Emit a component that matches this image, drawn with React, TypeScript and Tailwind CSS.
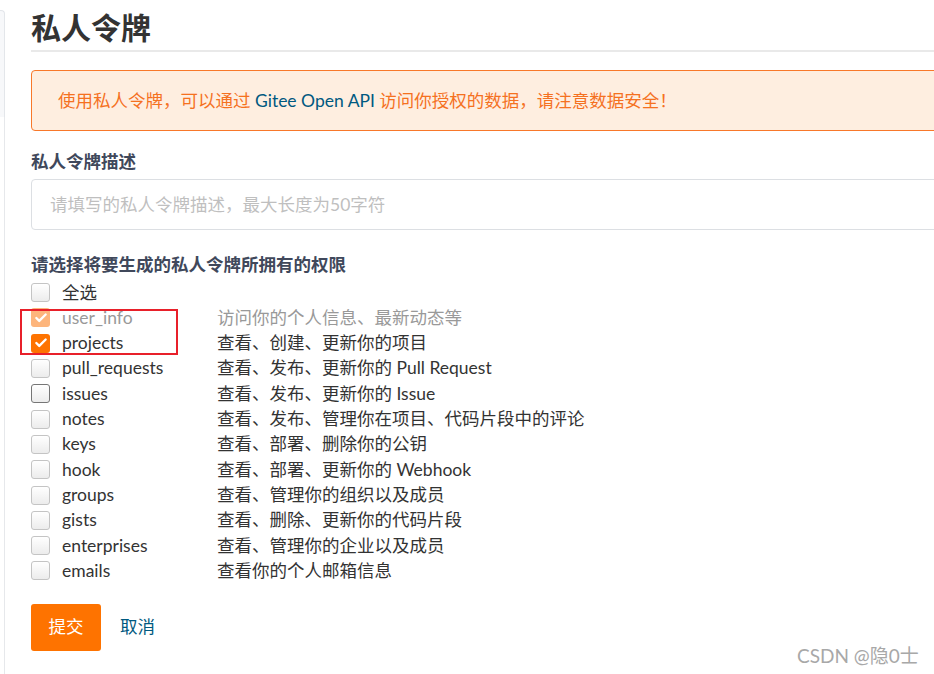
import { Check } from "lucide-react"

const scopes = [
  { name: "user_info", desc: "访问你的个人信息、最新动态等", checked: true, disabled: true },
  { name: "projects", desc: "查看、创建、更新你的项目", checked: true },
  { name: "pull_requests", desc: "查看、发布、更新你的 Pull Request" },
  { name: "issues", desc: "查看、发布、更新你的 Issue", hover: true },
  { name: "notes", desc: "查看、发布、管理你在项目、代码片段中的评论" },
  { name: "keys", desc: "查看、部署、删除你的公钥" },
  { name: "hook", desc: "查看、部署、更新你的 Webhook" },
  { name: "groups", desc: "查看、管理你的组织以及成员" },
  { name: "gists", desc: "查看、删除、更新你的代码片段" },
  { name: "enterprises", desc: "查看、管理你的企业以及成员" },
  { name: "emails", desc: "查看你的个人邮箱信息" },
]

function Box({ checked, disabled, hover }: { checked?: boolean; disabled?: boolean; hover?: boolean }) {
  if (checked) {
    return (
      <span
        className={`flex h-[19px] w-[19px] shrink-0 items-center justify-center rounded-[3px] ${
          disabled ? "bg-[#fdb57c]" : "bg-[#fe7300]"
        }`}
      >
        <Check className="h-[14px] w-[14px] text-white" strokeWidth={4} />
      </span>
    )
  }
  return (
    <span
      className={`h-[19px] w-[19px] shrink-0 rounded-[3px] border bg-gradient-to-b from-white to-[#ececec] ${
        hover ? "border-[#767676]" : "border-[#c4c4c4]"
      }`}
    />
  )
}

export default function App() {
  return (
    <div
      className="relative flex h-[674px] w-[934px] overflow-hidden bg-white text-[17.5px] text-[#333]"
      style={{ fontFamily: 'Lato, "Noto Sans CJK SC", sans-serif' }}
    >
      {/* left edge of the side panel */}
      <div className="flex w-[5px] shrink-0 flex-col">
        <div className="mt-[10px] h-[107px] rounded-tr-[4px] border-r border-t border-[#e3e6ea] bg-[#f7f8fa]" />
        <div className="ml-auto w-px flex-1 bg-[#e6e8eb]" />
      </div>

      <div className="ml-[26px] w-[940px] shrink-0">
        {/* Title */}
        <div className="border-b-2 border-[#e9e9e9] pb-[5px] pt-[9px] text-[30px] font-bold leading-[36px] text-[#333]">
          私人令牌
        </div>

        {/* Notice */}
        <div className="mt-[18px] flex h-[61px] items-center rounded-[4px] border border-[#f8782a] bg-[#feeee0] px-[26px] pt-[1px] text-[#f5711f]">
          使用私人令牌，可以通过&nbsp;<span className="text-[#005980]">Gitee Open API</span>&nbsp;访问你授权的数据，请注意数据安全！
        </div>

        {/* Description */}
        <div className="mt-[18px] font-bold leading-[25px] text-[#40485b]">私人令牌描述</div>
        <div className="mt-[5px] flex h-[51px] items-center rounded-[4px] border border-[#dcdfe3] px-[18px] pt-[1px] text-[#bfbfbf]">
          请填写的私人令牌描述，最大长度为50字符
        </div>

        {/* Scopes */}
        <div className="mt-[22px] font-bold leading-[25px] text-[#40485b]">请选择将要生成的私人令牌所拥有的权限</div>
        <div className="mt-[3px] flex flex-col">
          <div className="flex h-[25.3px] items-center">
            <Box />
            <span className="ml-[12px]">全选</span>
          </div>
          {scopes.map((s) => (
            <div key={s.name} className="flex h-[25.3px] items-center">
              <Box checked={s.checked} disabled={s.disabled} hover={s.hover} />
              <span className={`ml-[12px] w-[155px] ${s.disabled ? "text-[#999]" : ""}`}>{s.name}</span>
              <span className={s.disabled ? "text-[#999]" : ""}>{s.desc}</span>
            </div>
          ))}
        </div>

        {/* Actions */}
        <div className="mt-[20px] flex items-center">
          <button className="h-[47px] w-[70px] rounded-[3px] bg-[#fe7300] text-white">提交</button>
          <span className="ml-[19px] text-[#005980]">取消</span>
        </div>
      </div>

      {/* annotation */}
      <div className="absolute left-[20px] top-[309px] h-[46px] w-[158px] border-2 border-[#e8202a]" />

      {/* watermark */}
      <div className="absolute left-[797px] top-[643px] text-[19px] leading-[26px] text-[#a8a8a8]">CSDN @隐0士</div>
    </div>
  )
}
